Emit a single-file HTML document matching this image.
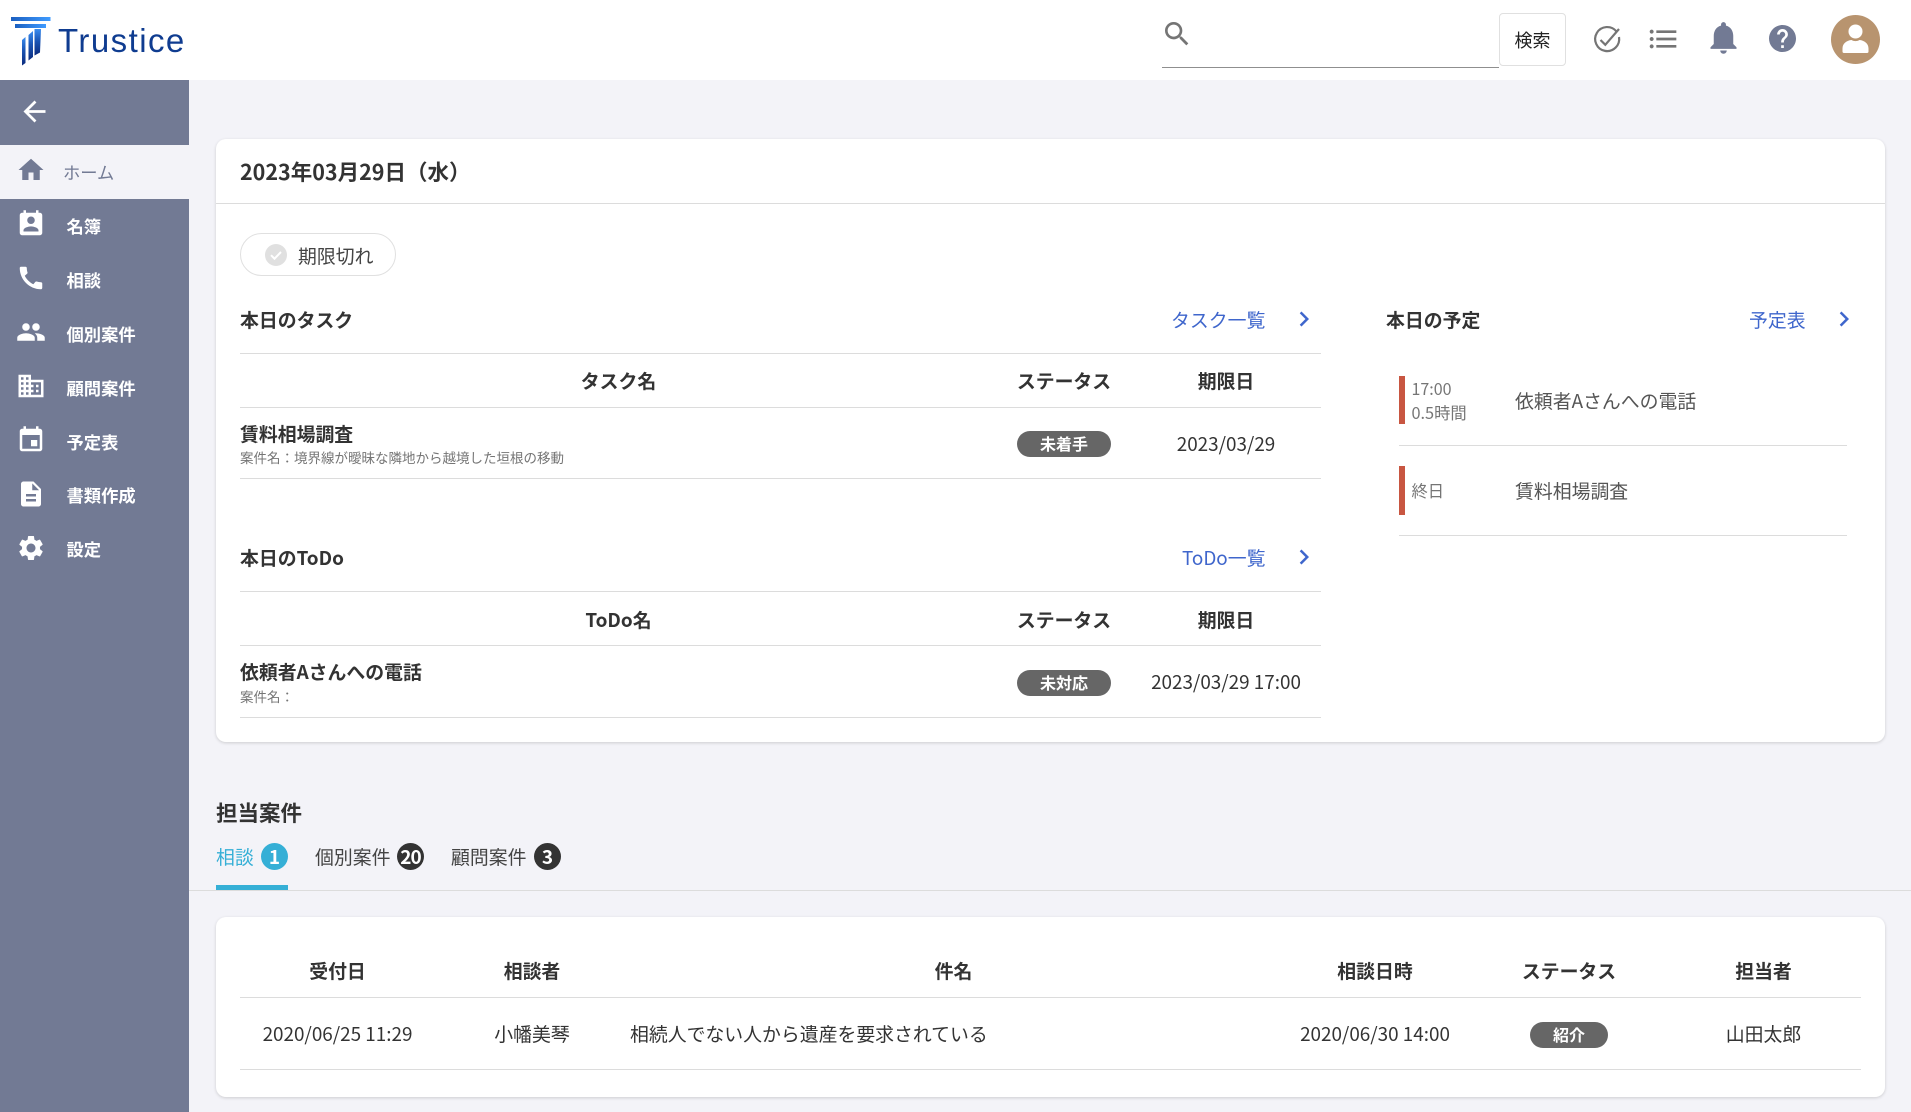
<!DOCTYPE html>
<html lang="ja"><head><meta charset="utf-8"><title>Trustice</title>
<style>
*{box-sizing:border-box}
html,body{margin:0;padding:0;width:1911px;height:1112px;overflow:hidden}
body{background:#f3f3f8;position:relative;font-family:"Liberation Sans","Noto Sans CJK JP",sans-serif;color:#333;font-size:18.870px}
.a{position:absolute}
.t{position:absolute;height:30px;line-height:30px;white-space:nowrap;font-family:"Noto Sans CJK JP","Liberation Sans",sans-serif}
.c{width:400px;text-align:center}
.b{font-weight:700}
.card{position:absolute;background:#fff;border-radius:10px;box-shadow:0 1px 3px rgba(0,0,0,.16)}
.l{position:absolute;height:1px;background:#dcdcdc}
.lk{color:#3f66cc}
.bd{position:absolute;height:26px;border-radius:13px;background:#666;color:#fff;text-align:center;line-height:24.500px;font-size:16px;font-weight:700;font-family:"Noto Sans CJK JP",sans-serif}
.nav{color:#fff;font-size:17.300px;left:66.500px;font-weight:700}
svg{position:absolute;display:block}
.cnt{position:absolute;width:27px;height:27px;border-radius:50%;color:#fff;text-align:center;line-height:27px;font-size:19px;font-weight:700;font-family:"Noto Sans CJK JP",sans-serif}
</style></head><body>

<div class="a" style="left:0;top:0;width:1911px;height:80px;background:#fff"></div>

<svg style="left:0;top:0" width="60" height="70" viewBox="0 0 60 70">
<defs><linearGradient id="g" x1="0" y1="0" x2="0" y2="1"><stop offset="0" stop-color="#3a8df0"/><stop offset=".45" stop-color="#1a55b5"/><stop offset="1" stop-color="#0b2a7c"/></linearGradient>
<linearGradient id="h" x1="0" y1="0" x2="1" y2="0"><stop offset="0" stop-color="#1b5fc0"/><stop offset="1" stop-color="#3f9bff"/></linearGradient></defs>
<rect x="11" y="17" width="39.500" height="4" fill="url(#h)"/>
<rect x="15" y="24" width="31" height="4" fill="url(#h)"/>
<polygon points="22,40 25.500,37 25.500,63 22,65.500" fill="url(#g)"/>
<polygon points="28.500,35 33,31 33,57 28.500,60.500" fill="url(#g)"/>
<polygon points="34.500,29 41,29 40,52.500 34.500,55.500" fill="url(#g)"/>
</svg>
<div class="a" style="left:58px;top:20px;height:42px;line-height:42px;font-size:33px;letter-spacing:1.450px;color:#0f3c90;font-family:'Liberation Sans',sans-serif">Trustice</div>

<svg style="left:1161px;top:18px" width="32" height="32" viewBox="0 0 24 24" fill="#757575"><path d="M15.500 14h-.79l-.28-.27C15.410 12.590 16 11.110 16 9.500 16 5.910 13.090 3 9.500 3S3 5.910 3 9.500 5.910 16 9.500 16c1.610 0 3.090-.59 4.230-1.570l.27.28v.79l5 4.990L20.490 19l-4.990-5zm-6 0C7.010 14 5 11.990 5 9.500S7.010 5 9.500 5 14 7.010 14 9.500 11.990 14 9.500 14z"/></svg>
<div class="a" style="left:1162px;top:66.500px;width:337px;height:1.500px;background:#8f8f8f"></div>
<div class="a" style="left:1499px;top:13px;width:67px;height:53px;border:1px solid #e0e0e0;border-radius:4px;background:#fff"></div>
<div class="t c" style="left:1332.500px;top:25px;font-size:18px;color:#222">検索</div>

<svg style="left:1590px;top:20px" width="36" height="36" viewBox="0 0 36 36" fill="none" stroke="#757575" stroke-width="2.200"><path d="M26.500 11.500A12 12 0 1 0 29 17"/><path d="M10.500 20l4.800 4.800L29 9"/></svg>
<svg style="left:1647px;top:23px" width="32" height="32" viewBox="0 0 24 24" fill="#757575"><path d="M3.500 10.500c-.83 0-1.500.67-1.500 1.500s.67 1.500 1.500 1.500S5 12.830 5 12s-.67-1.500-1.500-1.500zm0-5.500C2.670 5 2 5.670 2 6.500S2.670 8 3.500 8 5 7.330 5 6.500 4.330 5 3.500 5zm0 11c-.83 0-1.500.68-1.500 1.500s.68 1.500 1.500 1.500S5 18.320 5 17.500 4.330 16 3.500 16zM7 18.500h15v-2H7v2zm0-5.500h15v-2H7v2zm0-7.500v2h15v-2H7z"/></svg>
<svg style="left:1703.500px;top:18px" width="39" height="39" viewBox="0 0 24 24" fill="#727a94"><path d="M12 22c1.100 0 2-.9 2-2h-4c0 1.100.89 2 2 2zm6-6v-5c0-3.070-1.640-5.640-4.500-6.320V4c0-.83-.67-1.500-1.500-1.500s-1.500.67-1.500 1.500v.68C7.630 5.360 6 7.920 6 11v5l-2 2v1h16v-1l-2-2z"/></svg>
<svg style="left:1768.500px;top:25px" width="27" height="27" viewBox="2 2 20 20" fill="#727a94"><path d="M12 2C6.480 2 2 6.480 2 12s4.480 10 10 10 10-4.480 10-10S17.520 2 12 2zm1 17h-2v-2h2v2zm2.070-7.750l-.9.92C13.450 12.900 13 13.500 13 15h-2v-.5c0-1.100.45-2.100 1.170-2.830l1.240-1.260c.37-.36.59-.86.59-1.410 0-1.100-.9-2-2-2s-2 .9-2 2H8c0-2.210 1.790-4 4-4s4 1.790 4 4c0 .88-.36 1.680-.93 2.250z"/></svg>
<div class="a" style="left:1831px;top:15px;width:49px;height:49px;border-radius:50%;background:#b8946f"></div>
<svg style="left:1831px;top:15px" width="49" height="49" viewBox="0 0 49 49" fill="#fff"><circle cx="24.500" cy="16.500" r="7"/><path d="M13 38c-1 0-1.500-.5-1.500-1.500v-3c0-5 4-8 9-8.500 2.500 1.500 5.500 1.500 8 0 5 .5 9 3.500 9 8.500v3c0 1-.5 1.500-1.500 1.500z"/></svg>

<!-- sidebar -->
<div class="a" style="left:0;top:80px;width:189px;height:1032px;background:#727a94"></div>
<div class="a" style="left:0;top:145px;width:189px;height:54px;background:#f3f3f8"></div>
<svg style="left:18px;top:95px" width="33" height="33" viewBox="0 0 24 24" fill="#fff"><path d="M20 11H7.830l5.590-5.590L12 4l-8 8 8 8 1.410-1.410L7.830 13H20v-2z"/></svg>
<svg style="left:16px;top:155px" width="30" height="30" viewBox="0 0 24 24" fill="#727a94"><path d="M10 20v-6h4v6h5v-8h3L12 3 2 12h3v8z"/></svg>
<div class="t" style="left:63px;top:157px;font-size:17.300px;color:#727a94">ホーム</div>
<svg style="left:16px;top:208.500px" width="30" height="30" viewBox="0 0 24 24" fill="#fff"><path d="M19 3h-1V1h-2v2H8V1H6v2H5c-1.110 0-2 .9-2 2v14c0 1.100.89 2 2 2h14c1.100 0 2-.9 2-2V5c0-1.100-.9-2-2-2zm-7 3c1.660 0 3 1.340 3 3s-1.340 3-3 3-3-1.340-3-3 1.340-3 3-3zm6 12H6v-1c0-2 4-3.100 6-3.100s6 1.100 6 3.100v1z"/></svg>
<div class="t nav" style="top:211px">名簿</div>
<svg style="left:16px;top:262.500px" width="30" height="30" viewBox="0 0 24 24" fill="#fff"><path d="M20.010 15.380c-1.230 0-2.420-.2-3.530-.56-.35-.12-.74-.03-1.010.24l-1.570 1.970c-2.830-1.350-5.480-3.900-6.890-6.830l1.950-1.660c.27-.28.35-.67.24-1.020-.37-1.110-.56-2.300-.56-3.530 0-.54-.45-.99-.99-.99H4.190C3.650 3 3 3.240 3 3.990 3 13.280 10.730 21 20.010 21c.71 0 .99-.63.99-1.180v-3.450c0-.54-.45-.99-.99-.99z"/></svg>
<div class="t nav" style="top:265px">相談</div>
<svg style="left:16px;top:316.500px" width="30" height="30" viewBox="0 0 24 24" fill="#fff"><path d="M16 11c1.660 0 2.990-1.340 2.990-3S17.660 5 16 5c-1.660 0-3 1.340-3 3s1.340 3 3 3zm-8 0c1.660 0 2.990-1.340 2.990-3S9.660 5 8 5C6.340 5 5 6.340 5 8s1.340 3 3 3zm0 2c-2.330 0-7 1.170-7 3.500V19h14v-2.500c0-2.330-4.670-3.500-7-3.500zm8 0c-.29 0-.62.02-.97.05 1.160.84 1.970 1.970 1.970 3.450V19h6v-2.500c0-2.330-4.670-3.500-7-3.500z"/></svg>
<div class="t nav" style="top:319px">個別案件</div>
<svg style="left:16px;top:371px" width="30" height="30" viewBox="0 0 24 24" fill="#fff"><path d="M12 7V3H2v18h20V7H12zM6 19H4v-2h2v2zm0-4H4v-2h2v2zm0-4H4V9h2v2zm0-4H4V5h2v2zm4 12H8v-2h2v2zm0-4H8v-2h2v2zm0-4H8V9h2v2zm0-4H8V5h2v2zm10 12h-8v-2h2v-2h-2v-2h2v-2h-2V9h8v10zm-2-8h-2v2h2v-2zm0 4h-2v2h2v-2z"/></svg>
<div class="t nav" style="top:373px">顧問案件</div>
<svg style="left:16px;top:424.500px" width="30" height="30" viewBox="0 0 24 24" fill="#fff"><path d="M17 12h-5v5h5v-5zM16 1v2H8V1H6v2H5c-1.110 0-1.990.9-1.990 2L3 19c0 1.100.89 2 2 2h14c1.100 0 2-.9 2-2V5c0-1.100-.9-2-2-2h-1V1h-2zm3 18H5V8h14v11z"/></svg>
<div class="t nav" style="top:427px">予定表</div>
<svg style="left:16px;top:479px" width="30" height="30" viewBox="0 0 24 24" fill="#fff"><path d="M14 2H6c-1.100 0-1.990.9-1.990 2L4 20c0 1.100.89 2 1.990 2H18c1.100 0 2-.9 2-2V8l-6-6zm2 16H8v-2h8v2zm0-4H8v-2h8v2zm-3-5V3.500L18.500 9H13z"/></svg>
<div class="t nav" style="top:480px">書類作成</div>
<svg style="left:16px;top:533px" width="30" height="30" viewBox="0 0 24 24" fill="#fff"><path d="M19.140 12.940c.04-.3.06-.61.06-.94 0-.32-.02-.64-.07-.94l2.030-1.580c.18-.14.23-.41.12-.61l-1.920-3.320c-.12-.22-.37-.29-.59-.22l-2.390.96c-.5-.38-1.030-.7-1.620-.94l-.36-2.540c-.04-.24-.24-.41-.48-.41h-3.840c-.24 0-.43.17-.47.41l-.36 2.540c-.59.24-1.130.57-1.620.94l-2.390-.96c-.22-.08-.47 0-.59.22L2.740 8.870c-.12.21-.08.47.12.61l2.030 1.580c-.05.3-.09.63-.09.94s.02.64.07.94l-2.030 1.580c-.18.14-.23.41-.12.61l1.920 3.320c.12.22.37.29.59.22l2.390-.96c.5.38 1.030.7 1.620.94l.36 2.540c.05.24.24.41.48.41h3.840c.24 0 .44-.17.47-.41l.36-2.540c.59-.24 1.130-.56 1.620-.94l2.390.96c.22.08.47 0 .59-.22l1.920-3.320c.12-.22.07-.47-.12-.61l-2.010-1.580zM12 15.600c-1.980 0-3.600-1.620-3.600-3.600s1.620-3.600 3.600-3.600 3.600 1.620 3.600 3.600-1.620 3.600-3.600 3.600z"/></svg>
<div class="t nav" style="top:534px">設定</div>

<!-- card 1 -->
<div class="card" style="left:216px;top:139px;width:1669px;height:603px"></div>
<div class="l" style="left:216px;top:203px;width:1669px"></div>
<div class="t b" style="left:240px;top:157px;font-size:21.500px">2023年03月29日（水）</div>

<div class="a" style="left:240px;top:233px;width:156px;height:43px;border:1px solid #e0e0e0;border-radius:22px;background:#fff"></div>
<svg style="left:265px;top:243.500px" width="22" height="22" viewBox="0 0 22 22"><circle cx="11" cy="11" r="11" fill="#e0e0e0"/><path d="M6 11.200l3.500 3.500L16 8" fill="none" stroke="#fff" stroke-width="2"/></svg>
<div class="t" style="left:298px;top:240.500px;color:#444">期限切れ</div>

<div class="t b" style="left:240px;top:305px">本日のタスク</div>
<div class="t lk" style="left:1171px;top:304.500px">タスク一覧</div>
<svg style="left:1289px;top:304px" width="30" height="30" viewBox="0 0 24 24" fill="#3f66cc"><path d="M10 6L8.590 7.410 13.170 12l-4.580 4.590L10 18l6-6z"/></svg>
<div class="l" style="left:240px;top:353px;width:1081px"></div>
<div class="t c b" style="left:418.500px;top:366px">タスク名</div>
<div class="t c b" style="left:864px;top:366px">ステータス</div>
<div class="t c b" style="left:1026px;top:366px">期限日</div>
<div class="l" style="left:240px;top:407px;width:1081px"></div>
<div class="t b" style="left:240px;top:419px">賃料相場調査</div>
<div class="t" style="left:240px;top:442px;font-size:13.500px;color:#757575">案件名：境界線が曖昧な隣地から越境した垣根の移動</div>
<div class="bd" style="left:1017px;top:431px;width:94px">未着手</div>
<div class="t c" style="left:1026px;top:429px">2023/03/29</div>
<div class="l" style="left:240px;top:478px;width:1081px"></div>

<div class="t b" style="left:240px;top:543px">本日のToDo</div>
<div class="t lk" style="left:1182px;top:542.500px">ToDo一覧</div>
<svg style="left:1289px;top:542px" width="30" height="30" viewBox="0 0 24 24" fill="#3f66cc"><path d="M10 6L8.590 7.410 13.170 12l-4.580 4.590L10 18l6-6z"/></svg>
<div class="l" style="left:240px;top:591px;width:1081px"></div>
<div class="t c b" style="left:418.500px;top:605px">ToDo名</div>
<div class="t c b" style="left:864px;top:605px">ステータス</div>
<div class="t c b" style="left:1026px;top:605px">期限日</div>
<div class="l" style="left:240px;top:645px;width:1081px"></div>
<div class="t b" style="left:240px;top:657px">依頼者Aさんへの電話</div>
<div class="t" style="left:240px;top:681px;font-size:13.500px;color:#757575">案件名：</div>
<div class="bd" style="left:1017px;top:670px;width:94px">未対応</div>
<div class="t c" style="left:1026px;top:667px">2023/03/29 17:00</div>
<div class="l" style="left:240px;top:717px;width:1081px"></div>

<div class="t b" style="left:1386px;top:305px">本日の予定</div>
<div class="t lk" style="left:1749px;top:304.500px">予定表</div>
<svg style="left:1829px;top:304px" width="30" height="30" viewBox="0 0 24 24" fill="#3f66cc"><path d="M10 6L8.590 7.410 13.170 12l-4.580 4.590L10 18l6-6z"/></svg>
<div class="a" style="left:1399px;top:376px;width:6px;height:48px;background:#c85641"></div>
<div class="t" style="left:1411.500px;top:373px;font-size:16px;color:#757575">17:00</div>
<div class="t" style="left:1411.500px;top:397px;font-size:16.300px;color:#757575">0.5時間</div>
<div class="t" style="left:1515px;top:385.500px;color:#555">依頼者Aさんへの電話</div>
<div class="l" style="left:1399px;top:445px;width:448px"></div>
<div class="a" style="left:1399px;top:466px;width:6px;height:49px;background:#c85641"></div>
<div class="t" style="left:1411.500px;top:475px;font-size:16.300px;color:#757575">終日</div>
<div class="t" style="left:1515px;top:476px;color:#555">賃料相場調査</div>
<div class="l" style="left:1399px;top:535px;width:448px"></div>

<!-- tabs -->
<div class="t b" style="left:216px;top:798px;font-size:21.500px">担当案件</div>
<div class="t" style="left:216px;top:842px;color:#35afd6">相談</div>
<div class="cnt" style="left:261px;top:843px;background:#35afd6">1</div>
<div class="t" style="left:315px;top:842px;color:#444">個別案件</div>
<div class="cnt" style="left:397px;top:843px;background:#333;letter-spacing:-1px">20</div>
<div class="t" style="left:451px;top:842px;color:#444">顧問案件</div>
<div class="cnt" style="left:534px;top:843px;background:#333">3</div>
<div class="l" style="left:189px;top:890px;width:1722px"></div>
<div class="a" style="left:216px;top:885px;width:72px;height:5px;background:#35afd6"></div>

<!-- card 2 -->
<div class="card" style="left:216px;top:917px;width:1669px;height:180px"></div>
<div class="t c b" style="left:137.500px;top:956px">受付日</div>
<div class="t c b" style="left:332px;top:956px">相談者</div>
<div class="t c b" style="left:753.500px;top:956px">件名</div>
<div class="t c b" style="left:1175px;top:956px">相談日時</div>
<div class="t c b" style="left:1369px;top:956px">ステータス</div>
<div class="t c b" style="left:1563.500px;top:956px">担当者</div>
<div class="l" style="left:240px;top:997px;width:1621px"></div>
<div class="t c" style="left:137.500px;top:1019px">2020/06/25 11:29</div>
<div class="t c" style="left:332px;top:1019px">小幡美琴</div>
<div class="t" style="left:630px;top:1019px">相続人でない人から遺産を要求されている</div>
<div class="t c" style="left:1175px;top:1019px">2020/06/30 14:00</div>
<div class="bd" style="left:1530px;top:1021.500px;width:78px">紹介</div>
<div class="t c" style="left:1563.500px;top:1019px">山田太郎</div>
<div class="l" style="left:240px;top:1069px;width:1621px"></div>

</body></html>
